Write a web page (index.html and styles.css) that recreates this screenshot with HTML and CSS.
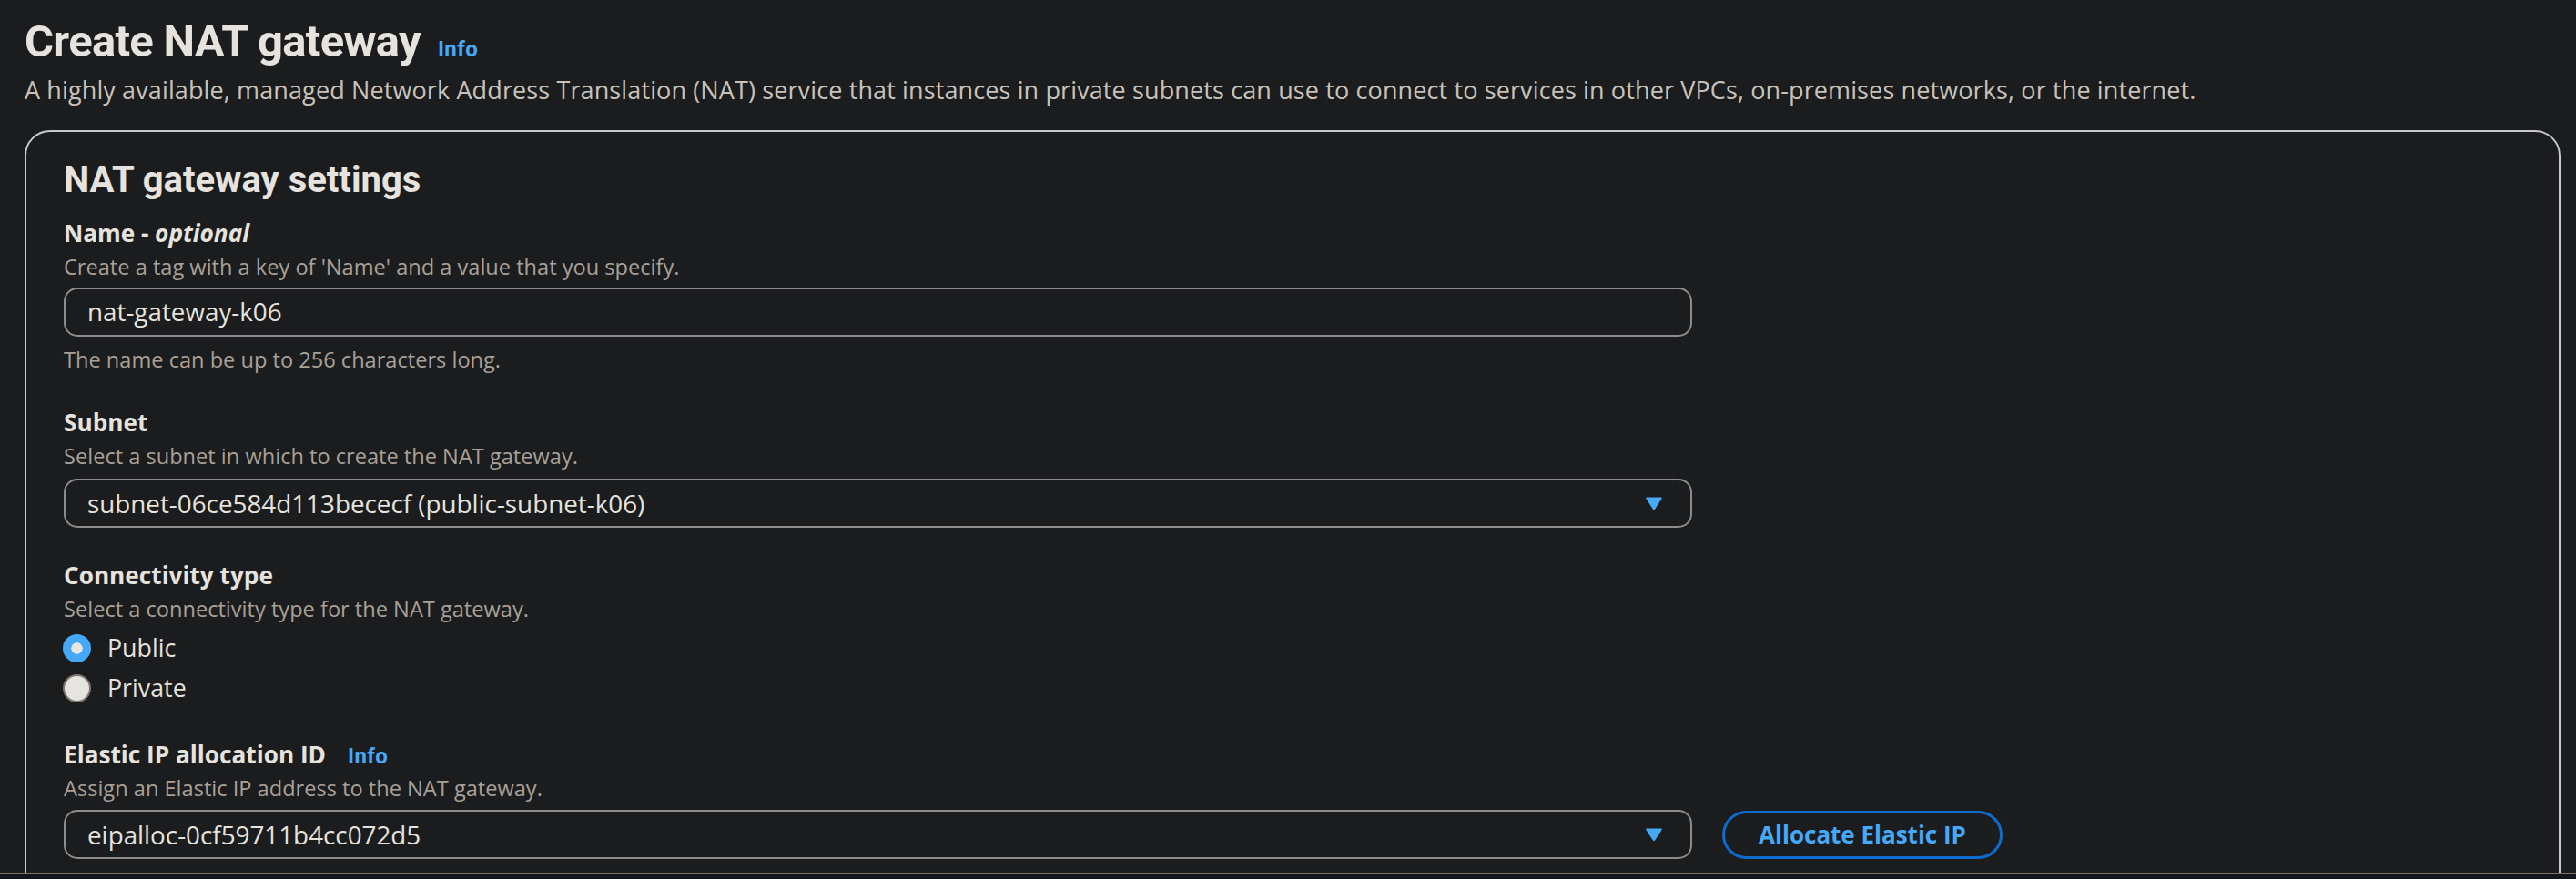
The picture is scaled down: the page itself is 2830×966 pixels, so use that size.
FILE: index.html
```html
<!DOCTYPE html>
<html lang="en">
<head>
<meta charset="utf-8">
<title>Create NAT gateway</title>
<link rel="stylesheet" href="styles.css">
</head>
<body>
<div class="page">
  <header class="page-header">
    <h1 class="title">Create NAT gateway<a class="info info-lg" href="#">Info</a></h1>
    <p class="lead">A highly available, managed Network Address Translation (NAT) service that instances in private subnets can use to connect to services in other VPCs, on-premises networks, or the internet.</p>
  </header>

  <section class="container">
    <h2 class="container-title">NAT gateway settings</h2>

    <div class="field field-name">
      <div class="label">Name - <i>optional</i></div>
      <div class="hint">Create a tag with a key of 'Name' and a value that you specify.</div>
      <div class="control">
        <div class="input">nat-gateway-k06</div>
      </div>
      <div class="constraint">The name can be up to 256 characters long.</div>
    </div>

    <div class="field field-subnet">
      <div class="label">Subnet</div>
      <div class="hint">Select a subnet in which to create the NAT gateway.</div>
      <div class="control">
        <div class="input select">
          <span>subnet-06ce584d113bececf (public-subnet-k06)</span>
          <svg class="caret" width="20" height="16" viewBox="0 0 20 16"><path d="M2.2 1.5 H17.8 Q19.6 1.5 18.6 3 L11.3 14.3 Q10 16 8.7 14.3 L1.4 3 Q0.4 1.5 2.2 1.5 Z" fill="#45a9f8"/></svg>
        </div>
      </div>
    </div>

    <div class="field field-conn">
      <div class="label">Connectivity type</div>
      <div class="hint">Select a connectivity type for the NAT gateway.</div>
      <div class="radios">
        <div class="radio-row"><span class="radio checked"></span><span class="radio-label">Public</span></div>
        <div class="radio-row"><span class="radio"></span><span class="radio-label">Private</span></div>
      </div>
    </div>

    <div class="field field-eip">
      <div class="label">Elastic IP allocation ID<a class="info info-sm" href="#">Info</a></div>
      <div class="hint">Assign an Elastic IP address to the NAT gateway.</div>
      <div class="control control-row">
        <div class="input select">
          <span>eipalloc-0cf59711b4cc072d5</span>
          <svg class="caret" width="20" height="16" viewBox="0 0 20 16"><path d="M2.2 1.5 H17.8 Q19.6 1.5 18.6 3 L11.3 14.3 Q10 16 8.7 14.3 L1.4 3 Q0.4 1.5 2.2 1.5 Z" fill="#45a9f8"/></svg>
        </div>
        <button class="btn" type="button">Allocate Elastic IP</button>
      </div>
    </div>
  </section>
</div>
<div class="bottom-bar"></div>
</body>
</html>
```

FILE: styles.css
```css
html, body {
  margin: 0;
  padding: 0;
  height: 966px;
  overflow: hidden;
  background: #1b1c1e;
}

body {
  font-family: "Open Sans", Roboto, Arial, sans-serif;
  color: #e6e2dd;
}

.page {
  padding: 16px 17px 0 27px;
}

.title {
  margin: 0;
  font-family: Roboto, Arial, sans-serif;
  font-size: 49px;
  line-height: 60px;
  font-weight: 700;
  letter-spacing: -0.7px;
  color: #e6e2dd;
}

.info {
  font-family: Roboto, Arial, sans-serif;
  color: #45a9f8;
  text-decoration: none;
  font-weight: 700;
  letter-spacing: 0.4px;
  line-height: 1;
}

.info-lg {
  font-size: 24px;
  margin-left: 19px;
}

.info-sm {
  font-size: 24px;
  margin-left: 24px;
}

.lead {
  margin: 6px 0 0;
  font-size: 27px;
  line-height: 34px;
  letter-spacing: 0.12px;
  color: #c8c2ba;
}

.container {
  margin-top: 27px;
  border: 2px solid #c8c8cc;
  border-radius: 28px;
  padding: 29px 41px 40px;
  height: 1000px;
}

.container-title {
  margin: 0;
  font-family: Roboto, Arial, sans-serif;
  font-size: 40px;
  line-height: 48px;
  font-weight: 700;
}

.field {
  display: flex;
  flex-direction: column;
}

.field-name { margin-top: 18px; }
.field-subnet { margin-top: 39px; }
.field-conn { margin-top: 36px; }
.field-eip { margin-top: 35px; }

.label {
  font-size: 26.2px;
  line-height: 32px;
  font-weight: 700;
  display: flex;
  align-items: baseline;
}

.label i {
  font-style: italic;
  margin-left: 0.25em;
}

.hint {
  margin-top: 7px;
  font-size: 23.6px;
  line-height: 28px;
  color: #a8a097;
}

.control {
  margin-top: 9px;
}

.field-subnet .control {
  margin-top: 11px;
}

.field-eip .control {
  margin-top: 10px;
}

.control-row {
  display: flex;
  align-items: center;
  gap: 33px;
}

.input {
  box-sizing: border-box;
  width: 1789px;
  height: 54px;
  border: 2px solid #8e8c8a;
  border-radius: 15px;
  padding: 0 30px 0 24px;
  font-size: 27.8px;
  line-height: 48px;
  color: #e6e2dd;
}

.select {
  display: flex;
  align-items: center;
  justify-content: space-between;
}

.caret {
  display: block;
  flex: none;
}

.constraint {
  margin-top: 11px;
  font-size: 23.6px;
  line-height: 28px;
  color: #a8a097;
}

.radios {
  margin-top: 7px;
  display: flex;
  flex-direction: column;
}

.radio-row {
  display: flex;
  align-items: center;
  height: 44px;
}

.radio {
  box-sizing: border-box;
  width: 31px;
  height: 31px;
  border-radius: 50%;
  background: #e6e4e0;
  border: 2px solid #7f786f;
  margin-left: -1px;
  flex: none;
}

.radio.checked {
  background: #45a9f8;
  border: 9px solid #45a9f8;
  box-shadow: inset 0 0 0 20px #e8e6e3;
}

.radio-label {
  margin-left: 18px;
  font-size: 26.8px;
  line-height: 44px;
}

.btn {
  box-sizing: border-box;
  width: 308px;
  height: 53px;
  border: 3px solid #0b6cd0;
  border-radius: 27px;
  background: transparent;
  color: #45a9f8;
  font-family: "Open Sans", Roboto, Arial, sans-serif;
  font-size: 26px;
  font-weight: 700;
  padding: 0;
}

.bottom-bar {
  position: fixed;
  left: 0;
  right: 0;
  bottom: 0;
  height: 5px;
  border-top: 2px solid #7a7264;
  background: #11151c;
}
```
